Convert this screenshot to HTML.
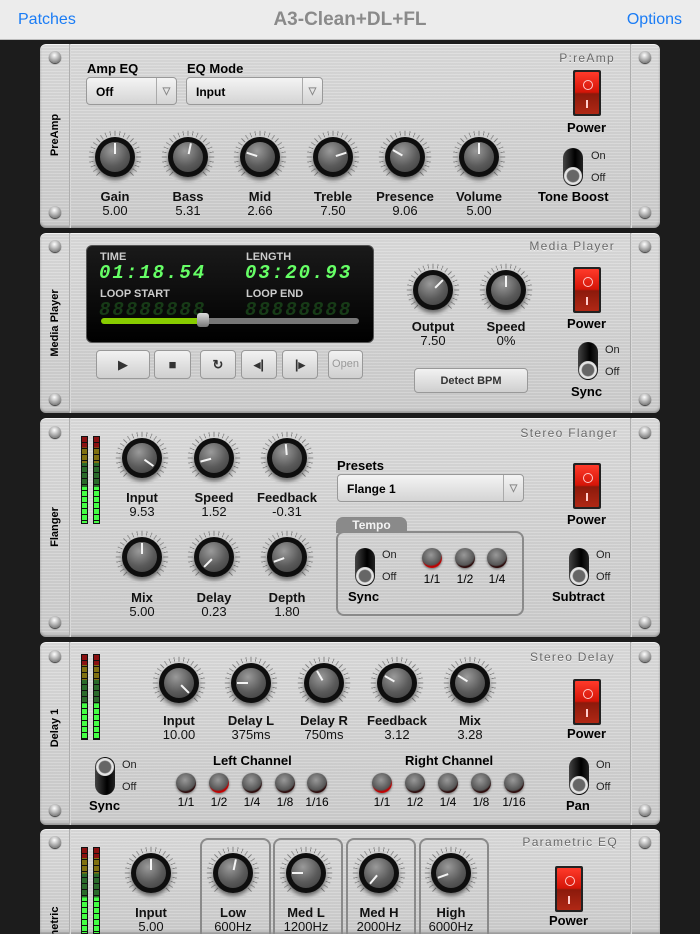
<!DOCTYPE html>
<html><head><meta charset="utf-8"><style>
*{margin:0;padding:0;box-sizing:border-box}
html{width:700px;height:934px;overflow:hidden}
body{width:700px;height:934px;overflow:hidden;background:#1c1c1c;font-family:"Liberation Sans",sans-serif;position:relative}
.a{position:absolute}
.nav{left:0;top:0;width:700px;height:40px;background:#ececec;border-bottom:1px solid #bbb}
.nav .l{left:18px;top:11px;color:#1a7cf5;font-size:16px}
.nav .r{right:18px;top:11px;color:#1a7cf5;font-size:16px}
.nav .t{left:0;width:700px;text-align:center;top:9px;color:#8a8a8a;font-weight:bold;font-size:19px}
.p{left:40px;width:620px;border-radius:6px;background:repeating-linear-gradient(180deg,rgba(255,255,255,.12) 0 1px,rgba(0,0,0,.03) 1px 3px),linear-gradient(180deg,#dcdcdc,#cdcdcd);box-shadow:inset 0 1px 0 #f4f4f4,inset 0 -2px 2px #999}
.p::before{content:"";position:absolute;left:29px;top:0;bottom:0;width:2px;background:linear-gradient(90deg,#999,#eee)}
.p::after{content:"";position:absolute;right:28px;top:0;bottom:0;width:2px;background:linear-gradient(90deg,#999,#eee)}
.sc{width:12px;height:12px;border-radius:50%;background:radial-gradient(circle at 45% 35%,#fff,#aaa 50%,#555);box-shadow:0 1px 1px #333}
.side{width:150px;text-align:center;font-weight:bold;font-size:11px;transform:rotate(-90deg);transform-origin:center}
.ttl{font-size:12px;color:#6a6a6a;letter-spacing:1.3px;text-align:right;width:200px;text-shadow:0 1px 0 #f2f2f2}
.k{width:56px;height:56px;margin:-28px 0 0 -28px}
.k .tk{position:absolute;inset:0;border-radius:50%;background:conic-gradient(from 140deg,#d3d3d3 0 80deg,transparent 80deg),repeating-conic-gradient(from -1deg,#888 0 2deg,transparent 2deg 11.25deg);-webkit-mask:radial-gradient(circle,transparent 21px,#000 21.5px,#000 26px,transparent 26.5px)}
.k .b{position:absolute;left:8px;top:8px;width:40px;height:40px;border-radius:50%;background:#0e0e0e;box-shadow:0 3px 4px rgba(0,0,0,.5)}
.k .b::before{content:"";position:absolute;left:5px;top:5px;width:30px;height:30px;border-radius:50%;background:radial-gradient(circle at 40% 30%,#9a9a9a,#5a5a5a 55%,#3a3a3a)}
.k .ir{position:absolute;left:8px;top:8px;width:40px;height:40px}
.k .ir::after{content:"";position:absolute;left:19px;top:6px;width:2px;height:11px;background:#f4f4f4}
.lb{width:100px;margin-left:-50px;text-align:center;font-weight:bold;font-size:13px;color:#111}
.vl{width:100px;margin-left:-50px;text-align:center;font-size:13px;color:#111}
.dd{height:28px;border:1px solid #999;border-radius:4px;background:linear-gradient(#f4f4f4,#d4d4d4);font-weight:bold;font-size:12px;padding:7px 0 0 9px}
.dd i{position:absolute;right:0;top:0;bottom:0;width:20px;border-left:1px solid #aaa;color:#888;font-style:normal;font-size:10px;text-align:center;padding-top:8px}
.hd{font-weight:bold;font-size:13px}
.pw{width:28px;height:46px;background:#222;border-radius:2px;padding:2px}
.pw div{height:42px;background:linear-gradient(#ff3a2a,#d41508 48%,#8c1a0c 52%,#b02815);border-radius:1px;position:relative}
.pw div::before{content:"";position:absolute;left:8px;top:8px;width:8px;height:8px;border:1px solid #fcc;border-radius:50%}
.pw div::after{content:"";position:absolute;left:11px;top:28px;width:2px;height:8px;background:#fcc}
.tg{width:20px;height:38px;border-radius:10px;background:linear-gradient(90deg,#444,#000 60%,#222)}
.tg::after{content:"";position:absolute;left:1px;width:18px;height:18px;border-radius:50%;background:radial-gradient(circle,#666 45%,#eee 55%,#999);}
.tg.off::after{bottom:1px}.tg.on::after{top:1px}
.sm{font-size:11px;color:#222}
.rb{width:20px;height:20px;margin:-10px 0 0 -10px;border-radius:50%;background:radial-gradient(circle at 45% 35%,#999,#555 60%,#2a0a0a 70%,#5a1a1a);box-shadow:0 1px 2px rgba(0,0,0,.5)}
.rb.s{background:radial-gradient(circle at 45% 35%,#999,#555 58%,#b00 68%,#e22)}
.rl{width:40px;margin-left:-20px;text-align:center;font-size:12px}
.vu{width:7px;border:1px solid #111;background-image:repeating-linear-gradient(180deg,transparent 0 5px,#111 5px 6px),linear-gradient(#8a1010 0 12%,#807010 12% 30%,#2a6a2a 30% 58%,#4f4 58%)}
.bt{height:29px;border:1px solid #999;border-radius:4px;background:linear-gradient(#f2f2f2,#cfcfcf);text-align:center;font-size:13px;padding-top:6px;color:#333}
.seg{color:#6f6;font-family:"Liberation Mono",monospace;font-weight:bold;font-size:19px;font-style:italic;letter-spacing:2px}
.dim{color:#173b17}
.box{border:2px solid #8a8a8a;border-radius:8px 8px 0 0;border-bottom:none}
</style></head><body>
<div class="a nav"><span class="a l">Patches</span><div class="a t">A3-Clean+DL+FL</div><span class="a r">Options</span></div>

<div class="a p" style="top:44px;height:184px"></div>
<div class="a side" style="left:-20px;top:129px">PreAmp</div>
<div class="a ttl" style="left:415px;top:51px">P:reAmp</div>
<div class="a hd" style="left:87px;top:61px">Amp EQ</div>
<div class="a hd" style="left:187px;top:61px">EQ Mode</div>
<div class="a dd" style="left:86px;top:77px;width:91px">Off<i>▽</i></div>
<div class="a dd" style="left:186px;top:77px;width:137px">Input<i>▽</i></div>

<div class="a p" style="top:233px;height:180px"></div>
<div class="a side" style="left:-20px;top:317px">Media Player</div>
<div class="a ttl" style="left:415px;top:239px">Media Player</div>
<div class="a" style="left:86px;top:245px;width:288px;height:98px;background:linear-gradient(#1a1a1a,#000);border-radius:6px;border:1px solid #555"></div>
<div class="a sm" style="left:100px;top:251px;color:#ccc;font-weight:bold">TIME</div>
<div class="a sm" style="left:246px;top:251px;color:#ccc;font-weight:bold">LENGTH</div>
<div class="a seg" style="left:99px;top:262px">01:18.54</div>
<div class="a seg" style="left:245px;top:262px">03:20.93</div>
<div class="a sm" style="left:100px;top:288px;color:#ccc;font-weight:bold">LOOP START</div>
<div class="a sm" style="left:246px;top:288px;color:#ccc;font-weight:bold">LOOP END</div>
<div class="a seg dim" style="left:99px;top:299px">88888888</div>
<div class="a seg dim" style="left:245px;top:299px">88888888</div>
<div class="a" style="left:101px;top:318px;width:258px;height:6px;border-radius:3px;background:linear-gradient(90deg,#8c0 0 40%,#777 40%)"></div>
<div class="a" style="left:197px;top:313px;width:12px;height:14px;border-radius:3px;background:linear-gradient(#ddd,#777)"></div>
<div class="a bt" style="left:96px;top:350px;width:54px">▶</div>
<div class="a bt" style="left:154px;top:350px;width:37px">■</div>
<div class="a bt" style="left:200px;top:350px;width:36px;font-weight:bold">↻</div>
<div class="a bt" style="left:241px;top:350px;width:36px;font-weight:bold">◂|</div>
<div class="a bt" style="left:282px;top:350px;width:36px;font-weight:bold">|▸</div>
<div class="a bt" style="left:328px;top:350px;width:35px;color:#999;font-size:11px;padding-top:7px">Open</div>
<div class="a bt" style="left:414px;top:368px;width:114px;height:25px;font-size:11px;font-weight:bold;padding-top:6px">Detect BPM</div>

<div class="a p" style="top:418px;height:219px"></div>
<div class="a side" style="left:-20px;top:521px">Flanger</div>
<div class="a ttl" style="left:418px;top:426px">Stereo Flanger</div>
<div class="a vu" style="left:81px;top:436px;height:88px"></div>
<div class="a vu" style="left:93px;top:436px;height:88px"></div>
<div class="a hd" style="left:337px;top:458px">Presets</div>
<div class="a dd" style="left:337px;top:474px;width:187px">Flange 1<i>▽</i></div>
<div class="a" style="left:336px;top:531px;width:188px;height:85px;border:2px solid #8a8a8a;border-radius:8px"></div>
<div class="a" style="left:336px;top:517px;width:71px;height:16px;background:#8a8a8a;border-radius:7px 7px 0 0;color:#f2f2f2;font-weight:bold;font-size:12px;text-align:center;padding-top:1px">Tempo</div>
<div class="a tg off" style="left:355px;top:548px"></div>
<div class="a sm" style="left:382px;top:549px">On</div><div class="a sm" style="left:382px;top:571px">Off</div>
<div class="a hd" style="left:348px;top:589px">Sync</div>
<div class="a rb s" style="left:432px;top:558px"></div><div class="a rb" style="left:465px;top:558px"></div><div class="a rb" style="left:497px;top:558px"></div>
<div class="a rl" style="left:432px;top:572px">1/1</div><div class="a rl" style="left:465px;top:572px">1/2</div><div class="a rl" style="left:497px;top:572px">1/4</div>
<div class="a tg off" style="left:569px;top:548px"></div>
<div class="a sm" style="left:596px;top:549px">On</div><div class="a sm" style="left:596px;top:571px">Off</div>
<div class="a hd" style="left:552px;top:589px">Subtract</div>

<div class="a p" style="top:642px;height:183px"></div>
<div class="a side" style="left:-20px;top:722px">Delay 1</div>
<div class="a ttl" style="left:415px;top:650px">Stereo Delay</div>
<div class="a vu" style="left:81px;top:654px;height:86px"></div>
<div class="a vu" style="left:93px;top:654px;height:86px"></div>
<div class="a tg on" style="left:95px;top:757px"></div>
<div class="a sm" style="left:122px;top:759px">On</div><div class="a sm" style="left:122px;top:781px">Off</div>
<div class="a hd" style="left:89px;top:798px">Sync</div>
<div class="a hd" style="left:213px;top:753px">Left Channel</div>
<div class="a hd" style="left:405px;top:753px">Right Channel</div>
<div class="a rb" style="left:186px;top:783px"></div><div class="a rb s" style="left:219px;top:783px"></div><div class="a rb" style="left:252px;top:783px"></div><div class="a rb" style="left:285px;top:783px"></div><div class="a rb" style="left:317px;top:783px"></div>
<div class="a rb s" style="left:382px;top:783px"></div><div class="a rb" style="left:415px;top:783px"></div><div class="a rb" style="left:448px;top:783px"></div><div class="a rb" style="left:481px;top:783px"></div><div class="a rb" style="left:514px;top:783px"></div>
<div class="a rl" style="left:186px;top:795px">1/1</div><div class="a rl" style="left:219px;top:795px">1/2</div><div class="a rl" style="left:252px;top:795px">1/4</div><div class="a rl" style="left:285px;top:795px">1/8</div><div class="a rl" style="left:317px;top:795px">1/16</div>
<div class="a rl" style="left:382px;top:795px">1/1</div><div class="a rl" style="left:415px;top:795px">1/2</div><div class="a rl" style="left:448px;top:795px">1/4</div><div class="a rl" style="left:481px;top:795px">1/8</div><div class="a rl" style="left:514px;top:795px">1/16</div>
<div class="a tg off" style="left:569px;top:757px"></div>
<div class="a sm" style="left:596px;top:759px">On</div><div class="a sm" style="left:596px;top:781px">Off</div>
<div class="a hd" style="left:566px;top:798px">Pan</div>

<div class="a p" style="top:829px;height:105px;border-radius:6px 6px 0 0"></div>
<div class="a" style="left:22px;top:896px;width:66px;height:38px;overflow:hidden"><div class="a side" style="left:-42px;top:33px;width:150px">Parametric</div></div>
<div class="a ttl" style="left:418px;top:835px">Parametric EQ</div>
<div class="a vu" style="left:81px;top:847px;height:87px"></div>
<div class="a vu" style="left:93px;top:847px;height:87px"></div>
<div class="a box" style="left:200px;top:838px;width:71px;height:96px"></div>
<div class="a box" style="left:273px;top:838px;width:70px;height:96px"></div>
<div class="a box" style="left:346px;top:838px;width:70px;height:96px"></div>
<div class="a box" style="left:419px;top:838px;width:70px;height:96px"></div>

<div class="a sc" style="left:49px;top:51px"></div><div class="a sc" style="left:49px;top:206px"></div><div class="a sc" style="left:639px;top:51px"></div><div class="a sc" style="left:639px;top:206px"></div>
<div class="a sc" style="left:49px;top:240px"></div><div class="a sc" style="left:49px;top:393px"></div><div class="a sc" style="left:639px;top:240px"></div><div class="a sc" style="left:639px;top:393px"></div>
<div class="a sc" style="left:49px;top:426px"></div><div class="a sc" style="left:49px;top:616px"></div><div class="a sc" style="left:639px;top:426px"></div><div class="a sc" style="left:639px;top:616px"></div>
<div class="a sc" style="left:49px;top:650px"></div><div class="a sc" style="left:49px;top:804px"></div><div class="a sc" style="left:639px;top:650px"></div><div class="a sc" style="left:639px;top:804px"></div>
<div class="a sc" style="left:49px;top:836px"></div><div class="a sc" style="left:639px;top:836px"></div>

<div class="a pw" style="left:573px;top:70px"><div></div></div><div class="a hd" style="left:567px;top:120px">Power</div>
<div class="a pw" style="left:573px;top:267px"><div></div></div><div class="a hd" style="left:567px;top:316px">Power</div>
<div class="a pw" style="left:573px;top:463px"><div></div></div><div class="a hd" style="left:567px;top:512px">Power</div>
<div class="a pw" style="left:573px;top:679px"><div></div></div><div class="a hd" style="left:567px;top:726px">Power</div>
<div class="a pw" style="left:555px;top:866px"><div></div></div><div class="a hd" style="left:549px;top:913px">Power</div>
<div class="a tg off" style="left:563px;top:148px"></div>
<div class="a sm" style="left:591px;top:150px">On</div><div class="a sm" style="left:591px;top:172px">Off</div>
<div class="a hd" style="left:538px;top:189px">Tone Boost</div>
<div class="a tg off" style="left:578px;top:342px"></div>
<div class="a sm" style="left:605px;top:344px">On</div><div class="a sm" style="left:605px;top:366px">Off</div>
<div class="a hd" style="left:571px;top:384px">Sync</div>

<div class="a k" style="left:115px;top:157px"><div class="tk"></div><div class="b"></div><div class="ir" style="transform:rotate(0deg)"></div></div>
<div class="a k" style="left:188px;top:157px"><div class="tk"></div><div class="b"></div><div class="ir" style="transform:rotate(12deg)"></div></div>
<div class="a k" style="left:260px;top:157px"><div class="tk"></div><div class="b"></div><div class="ir" style="transform:rotate(-72deg)"></div></div>
<div class="a k" style="left:333px;top:157px"><div class="tk"></div><div class="b"></div><div class="ir" style="transform:rotate(72deg)"></div></div>
<div class="a k" style="left:405px;top:157px"><div class="tk"></div><div class="b"></div><div class="ir" style="transform:rotate(-60deg)"></div></div>
<div class="a k" style="left:479px;top:157px"><div class="tk"></div><div class="b"></div><div class="ir" style="transform:rotate(0deg)"></div></div>
<div class="a lb" style="left:115px;top:189px">Gain</div><div class="a vl" style="left:115px;top:203px">5.00</div>
<div class="a lb" style="left:188px;top:189px">Bass</div><div class="a vl" style="left:188px;top:203px">5.31</div>
<div class="a lb" style="left:260px;top:189px">Mid</div><div class="a vl" style="left:260px;top:203px">2.66</div>
<div class="a lb" style="left:333px;top:189px">Treble</div><div class="a vl" style="left:333px;top:203px">7.50</div>
<div class="a lb" style="left:405px;top:189px">Presence</div><div class="a vl" style="left:405px;top:203px">9.06</div>
<div class="a lb" style="left:479px;top:189px">Volume</div><div class="a vl" style="left:479px;top:203px">5.00</div>

<div class="a k" style="left:433px;top:290px"><div class="tk"></div><div class="b"></div><div class="ir" style="transform:rotate(45deg)"></div></div>
<div class="a k" style="left:506px;top:290px"><div class="tk"></div><div class="b"></div><div class="ir" style="transform:rotate(0deg)"></div></div>
<div class="a lb" style="left:433px;top:319px">Output</div><div class="a vl" style="left:433px;top:333px">7.50</div>
<div class="a lb" style="left:506px;top:319px">Speed</div><div class="a vl" style="left:506px;top:333px">0%</div>

<div class="a k" style="left:142px;top:458px"><div class="tk"></div><div class="b"></div><div class="ir" style="transform:rotate(125deg)"></div></div>
<div class="a k" style="left:214px;top:458px"><div class="tk"></div><div class="b"></div><div class="ir" style="transform:rotate(-105deg)"></div></div>
<div class="a k" style="left:287px;top:458px"><div class="tk"></div><div class="b"></div><div class="ir" style="transform:rotate(-5deg)"></div></div>
<div class="a lb" style="left:142px;top:490px">Input</div><div class="a vl" style="left:142px;top:504px">9.53</div>
<div class="a lb" style="left:214px;top:490px">Speed</div><div class="a vl" style="left:214px;top:504px">1.52</div>
<div class="a lb" style="left:287px;top:490px">Feedback</div><div class="a vl" style="left:287px;top:504px">-0.31</div>
<div class="a k" style="left:142px;top:557px"><div class="tk"></div><div class="b"></div><div class="ir" style="transform:rotate(0deg)"></div></div>
<div class="a k" style="left:214px;top:557px"><div class="tk"></div><div class="b"></div><div class="ir" style="transform:rotate(-135deg)"></div></div>
<div class="a k" style="left:287px;top:557px"><div class="tk"></div><div class="b"></div><div class="ir" style="transform:rotate(-110deg)"></div></div>
<div class="a lb" style="left:142px;top:590px">Mix</div><div class="a vl" style="left:142px;top:604px">5.00</div>
<div class="a lb" style="left:214px;top:590px">Delay</div><div class="a vl" style="left:214px;top:604px">0.23</div>
<div class="a lb" style="left:287px;top:590px">Depth</div><div class="a vl" style="left:287px;top:604px">1.80</div>

<div class="a k" style="left:179px;top:683px"><div class="tk"></div><div class="b"></div><div class="ir" style="transform:rotate(135deg)"></div></div>
<div class="a k" style="left:251px;top:683px"><div class="tk"></div><div class="b"></div><div class="ir" style="transform:rotate(-90deg)"></div></div>
<div class="a k" style="left:324px;top:683px"><div class="tk"></div><div class="b"></div><div class="ir" style="transform:rotate(-30deg)"></div></div>
<div class="a k" style="left:397px;top:683px"><div class="tk"></div><div class="b"></div><div class="ir" style="transform:rotate(-60deg)"></div></div>
<div class="a k" style="left:470px;top:683px"><div class="tk"></div><div class="b"></div><div class="ir" style="transform:rotate(-58deg)"></div></div>
<div class="a lb" style="left:179px;top:713px">Input</div><div class="a vl" style="left:179px;top:727px">10.00</div>
<div class="a lb" style="left:251px;top:713px">Delay L</div><div class="a vl" style="left:251px;top:727px">375ms</div>
<div class="a lb" style="left:324px;top:713px">Delay R</div><div class="a vl" style="left:324px;top:727px">750ms</div>
<div class="a lb" style="left:397px;top:713px">Feedback</div><div class="a vl" style="left:397px;top:727px">3.12</div>
<div class="a lb" style="left:470px;top:713px">Mix</div><div class="a vl" style="left:470px;top:727px">3.28</div>

<div class="a k" style="left:151px;top:873px"><div class="tk"></div><div class="b"></div><div class="ir" style="transform:rotate(0deg)"></div></div>
<div class="a k" style="left:233px;top:873px"><div class="tk"></div><div class="b"></div><div class="ir" style="transform:rotate(12deg)"></div></div>
<div class="a k" style="left:306px;top:873px"><div class="tk"></div><div class="b"></div><div class="ir" style="transform:rotate(-90deg)"></div></div>
<div class="a k" style="left:379px;top:873px"><div class="tk"></div><div class="b"></div><div class="ir" style="transform:rotate(-140deg)"></div></div>
<div class="a k" style="left:451px;top:873px"><div class="tk"></div><div class="b"></div><div class="ir" style="transform:rotate(-110deg)"></div></div>
<div class="a lb" style="left:151px;top:905px">Input</div><div class="a vl" style="left:151px;top:919px">5.00</div>
<div class="a lb" style="left:233px;top:905px">Low</div><div class="a vl" style="left:233px;top:919px">600Hz</div>
<div class="a lb" style="left:306px;top:905px">Med L</div><div class="a vl" style="left:306px;top:919px">1200Hz</div>
<div class="a lb" style="left:379px;top:905px">Med H</div><div class="a vl" style="left:379px;top:919px">2000Hz</div>
<div class="a lb" style="left:451px;top:905px">High</div><div class="a vl" style="left:451px;top:919px">6000Hz</div>
</body></html>
